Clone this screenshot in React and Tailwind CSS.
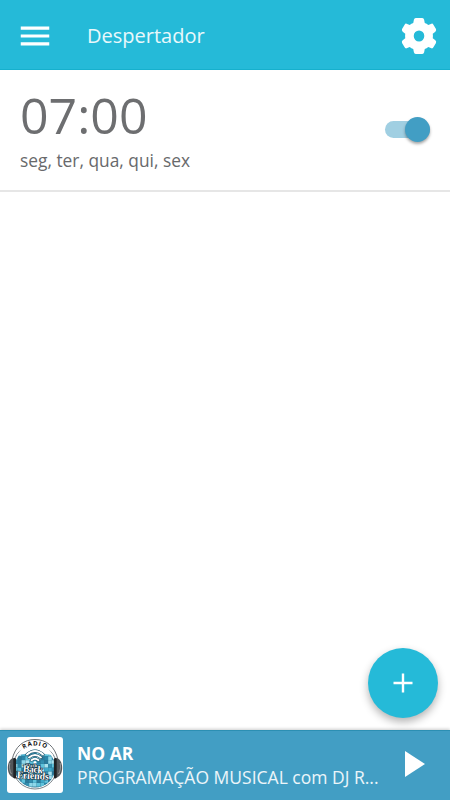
import React, { useState } from 'react';
import { MdMenu } from 'react-icons/md';

const TILES = ['#2a86a8', '#8ed8ea', '#3fa9c9', '#2a7a9b', '#5fc3dc', '#348fb0', '#a9e2ee'];

const GearIcon = () => (
  <svg viewBox="0 0 108 108" className="h-9 w-9" fill="#fff" fillRule="evenodd">
    <path transform="translate(2.2 0) scale(0.96 1)" d="M44 0H64Q69 0 70 5L72 15Q78 17 83 21L93 17Q97 16 99 20L107 33Q109 37 105 41L97 47Q98 54 97 61L105 67Q109 71 107 75L99 88Q97 92 93 91L83 87Q78 91 72 93L70 103Q69 108 64 108H44Q39 108 38 103L36 93Q30 91 25 87L15 91Q11 92 9 88L1 75Q-1 71 3 67L11 61Q10 54 11 47L3 41Q-1 37 1 33L9 20Q11 16 15 17L25 21Q30 17 36 15L38 5Q39 0 44 0ZM54 37.5A16.5 16.5 0 1 0 54 70.5A16.5 16.5 0 1 0 54 37.5Z" />
  </svg>
);

const StationLogo = () => {
  const tiles = [];
  for (let row = 0; row < 11; row++) {
    for (let col = 0; col < 11; col++) {
      tiles.push(
        <rect key={`${row}-${col}`} x={7 + col * 3.8} y={8 + row * 3.8} width="3.6" height="3.6"
          fill={TILES[(row * 3 + col * 5 + ((row * col) % 4)) % 7]} />
      );
    }
  }

  return (
    <svg viewBox="0 0 56 56" className="h-14 w-14">
      <defs>
        <clipPath id="ball"><circle cx="28" cy="30.5" r="20" /></clipPath>
        <path id="arcTop" d="M7.5 29 A20.5 20.5 0 0 1 48.5 29" />
      </defs>
      {/* disco ball */}
      <circle cx="28" cy="30" r="22" fill="#fff" stroke="#55636b" strokeWidth="0.8" />
      <circle cx="28" cy="30.5" r="20" fill="#2a718e" />
      <g clipPath="url(#ball)">{tiles}</g>
      {/* headphones */}
      <path d="M5 23 C8 9 17 2.5 28 2.5 C39 2.5 48 9 51 23" fill="none" stroke="#6a6f73" strokeWidth="1" />
      <path d="M7.5 21 C2.5 21 0.8 27 0.8 31 C0.8 36 3.5 41 9 41.5 Z" fill="#54585b" />
      <path d="M48.5 21 C53.5 21 55.2 27 55.2 31 C55.2 36 52.5 41 47 41.5 Z" fill="#54585b" />
      <path d="M2.8 26 C2 30 2.6 34 4.4 37 M53.2 26 C54 30 53.4 34 51.6 37" fill="none" stroke="#96999b" strokeWidth="1" />
      <rect x="6.3" y="21" width="2.8" height="20.5" rx="1.4" fill="#202325" />
      <rect x="46.9" y="21" width="2.8" height="20.5" rx="1.4" fill="#202325" />
      {/* name plate */}
      <path d="M10 18 Q28 -10 46 18 L37 17 Q28 8 19 17 Z" fill="#fff" />
      <text fill="#111" fontSize="6.2" fontWeight="700" letterSpacing="0.9" textAnchor="middle" className="font-['Open_Sans',sans-serif]">
        <textPath href="#arcTop" startOffset="50%">RADIO</textPath>
      </text>
      <g fill="none" stroke="#1a4a5e" strokeWidth="3" strokeLinecap="round">
        <path d="M20 17.5 Q28 10.5 36 17.5" />
        <path d="M22 20.5 Q28 15.5 34 20.5" />
        <path d="M24.5 23.2 Q28 20.2 31.5 23.2" />
      </g>
      <g fill="none" stroke="#fff" strokeWidth="1.9" strokeLinecap="round">
        <path d="M20 17.5 Q28 10.5 36 17.5" />
        <path d="M22 20.5 Q28 15.5 34 20.5" />
        <path d="M24.5 23.2 Q28 20.2 31.5 23.2" />
      </g>
      <circle cx="28" cy="25.5" r="1.5" fill="#fff" />
      <g fill="#fff" stroke="#102c3a" strokeWidth="1.2" paintOrder="stroke" fontWeight="700" className="font-['Liberation_Serif',serif]">
        <text x="19" y="30" fontSize="4.5" textLength="11">Flash</text>
        <text x="16" y="35.5" fontSize="10" textLength="20" transform="rotate(4 26 32)">Back</text>
        <text x="10" y="42" fontSize="10" textLength="32" transform="rotate(3 27 38)">Friends</text>
      </g>
    </svg>
  );
};

const App = () => {
  const [enabled, setEnabled] = useState(true);

  return (
    <div className="flex h-screen w-full flex-col overflow-hidden bg-white font-['Open_Sans',sans-serif]">

      {/* Header */}
      <header className="flex h-[70px] shrink-0 items-center border-b border-[#16b0cd] bg-[#25bad8] pr-[13px] pl-4 text-white">
        <button aria-label="Menu" className="mt-[3px]"><MdMenu className="h-[38px] w-[38px]" /></button>
        <h1 className="mt-0.5 ml-[33px] flex-1 text-[20px] leading-7 text-white/90">Despertador</h1>
        <button aria-label="Ajustes" className="mt-[3px]"><GearIcon /></button>
      </header>

      {/* Alarm */}
      <main className="flex-1">
        <div className="flex h-[122px] items-start justify-between border-b-2 border-[#e6e6e6] pr-5 pl-5">
          <div>
            <p className="mt-[15px] text-[50px] leading-[60px] text-[#6d6e70]">07:00</p>
            <p className="mt-px text-[17.35px] leading-7 text-[#68696b]">seg, ter, qua, qui, sex</p>
          </div>
          <button
            role="switch"
            aria-checked={enabled}
            aria-label="Alarme"
            onClick={() => setEnabled(!enabled)}
            className={`mt-[51px] flex h-[17px] w-[45px] items-center rounded-full ${enabled ? 'justify-end bg-[#a0cfe2]' : 'justify-start bg-gray-300'}`}
          >
            <span className={`h-[25px] w-[25px] shrink-0 rounded-full shadow-[0_2px_3px_rgba(0,0,0,0.35)] ${enabled ? 'bg-[#429ec4]' : 'bg-gray-100'}`} />
          </button>
        </div>
      </main>

      <button aria-label="Adicionar" className="mr-[12.5px] mb-[12.5px] flex h-[70px] w-[70px] shrink-0 items-center justify-center self-end rounded-full bg-[#25bad8] shadow-[0_4px_8px_rgba(0,0,0,0.3)]">
        <svg viewBox="0 0 20 20" className="h-5 w-5" stroke="#fff" strokeWidth="2.4">
          <path d="M10 0.5V19.5M0.5 10H19.5" />
        </svg>
      </button>

      {/* Player */}
      <footer className="flex h-[70px] shrink-0 items-center border-t border-[#2c8fb3] bg-[#429ec4] pb-px pl-[7px] text-white shadow-[0_-1px_3px_rgba(0,0,0,0.2)]">
        <div className="h-14 w-14 shrink-0 overflow-hidden rounded-[3px] bg-white">
          <StationLogo />
        </div>
        <div className="ml-[14px] w-[304px]">
          <p className="text-[17.5px] leading-6 font-bold">NO AR</p>
          <p className="text-[17.5px] leading-6 whitespace-nowrap text-white/90">PROGRAMAÇÃO MUSICAL com DJ R...</p>
        </div>
        <button aria-label="Tocar" className="mb-0.5 ml-6">
          <svg viewBox="0 0 20 26" className="h-[26px] w-5" fill="#fff">
            <path d="M0 0L20 13L0 26Z" />
          </svg>
        </button>
      </footer>
    </div>
  );
};

export default App;
